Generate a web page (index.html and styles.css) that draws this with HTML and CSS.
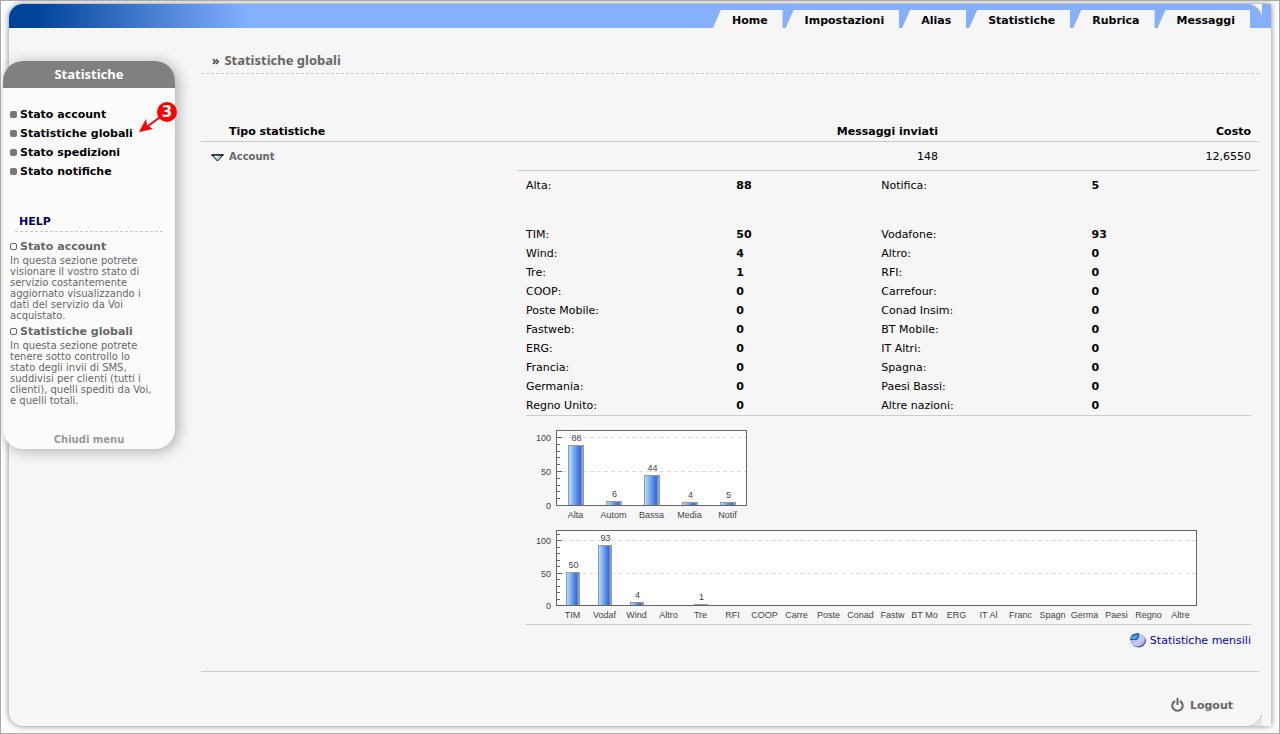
FILE: index.html
```html
<!doctype html>
<html lang="it">
<head>
    <meta charset="UTF-8">
    <meta name="viewport" content="width=device-width, initial-scale=1.0">
    <title>Statistiche globali</title>
    <link rel="stylesheet" href="styles.css">
</head>
<body>
<div class="page">
    <div class="header">
        <nav class="tabs">
            <a class="tab" href="#">Home</a>
            <a class="tab" href="#">Impostazioni</a>
            <a class="tab" href="#">Alias</a>
            <a class="tab" href="#">Statistiche</a>
            <a class="tab" href="#">Rubrica</a>
            <a class="tab" href="#">Messaggi</a>
        </nav>
        <svg class="corner-top" width="12" height="13" viewBox="0 0 12 13">
            <defs>
                <linearGradient id="fold" x1="0" y1="1" x2="1" y2="0">
                    <stop offset="0.4" stop-color="#c4c4c4"/>
                    <stop offset="0.8" stop-color="#fff"/>
                </linearGradient>
            </defs>
            <path d="M0 0H12V13Q10 3 0 0Z" fill="url(#fold)"/>
        </svg>
    </div>

    <div class="body">
        <aside class="sidebar">
            <h2 class="sidebar-title">Statistiche</h2>
            <ul class="menu">
                <li><a href="#">Stato account</a></li>
                <li><a href="#">Statistiche globali</a></li>
                <li><a href="#">Stato spedizioni</a></li>
                <li><a href="#">Stato notifiche</a></li>
            </ul>
            <h3 class="help-title">HELP</h3>
            <div class="help">
                <h4>Stato account</h4>
                <p>In questa sezione potrete<br>visionare il vostro stato di<br>servizio costantemente<br>aggiornato visualizzando i<br>dati del servizio da Voi<br>acquistato.</p>
                <h4>Statistiche globali</h4>
                <p>In questa sezione potrete<br>tenere sotto controllo lo<br>stato degli invii di SMS,<br>suddivisi per clienti (tutti i<br>clienti), quelli spediti da Voi,<br>e quelli totali.</p>
            </div>
            <button class="close-menu" type="button">Chiudi menu</button>
            <div class="marker">
                <svg width="42" height="34" viewBox="0 0 42 34">
                    <path d="M26 14L11 25" stroke="#f00" stroke-width="2"/>
                    <path d="M2 31L9 18L10 24L16 28Z" fill="#f00"/>
                    <circle cx="30" cy="11" r="10" fill="#f00"/>
                    <text class="marker-number" x="30" y="16" text-anchor="middle">3</text>
                </svg>
            </div>
        </aside>

        <main class="content">
            <h1 class="title"><span class="arrows">»</span> Statistiche globali</h1>

            <table class="summary">
                <thead>
                    <tr>
                        <th class="type">Tipo statistiche</th>
                        <th class="sent">Messaggi inviati</th>
                        <th class="cost">Costo</th>
                    </tr>
                </thead>
                <tbody>
                    <tr>
                        <td class="type">
                            <button class="toggle" type="button">
                                <svg width="13" height="8" viewBox="0 0 13 8">
                                    <path d="M1 1H12L6.500 7Z" fill="#a8dcf0" stroke="#000"/>
                                    <path d="M2.500 1.500H8L5 4Z" fill="#fff"/>
                                    <path d="M0 1H13" stroke="#000" stroke-width="1"/>
                                </svg>
                                Account
                            </button>
                        </td>
                        <td class="sent">148</td>
                        <td class="cost">12,6550</td>
                    </tr>
                </tbody>
            </table>

            <div class="details">
                <table class="counts priority">
                    <tr><th>Alta:</th><td>88</td><th>Notifica:</th><td>5</td></tr>
                </table>
                <table class="counts">
                    <tr><th>TIM:</th><td>50</td><th>Vodafone:</th><td>93</td></tr>
                    <tr><th>Wind:</th><td>4</td><th>Altro:</th><td>0</td></tr>
                    <tr><th>Tre:</th><td>1</td><th>RFI:</th><td>0</td></tr>
                    <tr><th>COOP:</th><td>0</td><th>Carrefour:</th><td>0</td></tr>
                    <tr><th>Poste Mobile:</th><td>0</td><th>Conad Insim:</th><td>0</td></tr>
                    <tr><th>Fastweb:</th><td>0</td><th>BT Mobile:</th><td>0</td></tr>
                    <tr><th>ERG:</th><td>0</td><th>IT Altri:</th><td>0</td></tr>
                    <tr><th>Francia:</th><td>0</td><th>Spagna:</th><td>0</td></tr>
                    <tr><th>Germania:</th><td>0</td><th>Paesi Bassi:</th><td>0</td></tr>
                    <tr><th>Regno Unito:</th><td>0</td><th>Altre nazioni:</th><td>0</td></tr>
                </table>

                <div class="charts">
                    <svg class="chart" id="chart-priority" width="221" height="94"></svg>
                    <svg class="chart" id="chart-operators" width="671" height="94"></svg>
                </div>

                <a class="monthly" href="#">
                    <svg width="16" height="15" viewBox="0 0 16 15">
                        <defs>
                            <linearGradient id="pie" x1="0" y1="0" x2="1" y2="1">
                                <stop offset="0" stop-color="#8e92e4"/>
                                <stop offset="0.600" stop-color="#c8ccf8"/>
                                <stop offset="1" stop-color="#9498e4"/>
                            </linearGradient>
                        </defs>
                        <ellipse cx="8.500" cy="8" rx="7.500" ry="6.500" fill="#54588c"/>
                        <ellipse cx="7.500" cy="7" rx="7.500" ry="6.500" fill="url(#pie)"/>
                        <path d="M0 6Q1 0 9 0V4L7 7H0Z" fill="#1c5ca0"/>
                        <path d="M1 5Q2 2 8 2V3L6 6H0Z" fill="#48a8e8"/>
                    </svg>
                    Statistiche mensili
                </a>
            </div>

            <div class="footer">
                <a class="logout" href="#">
                    <svg width="13" height="14" viewBox="0 0 13 14" fill="none" stroke="#666" stroke-width="2">
                        <path d="M4 3A5.200 5.200 0 1 0 9 3M6.500 0V7"/>
                    </svg>
                    Logout
                </a>
            </div>
        </main>
    </div>
    <svg class="corner-bottom" width="12" height="12" viewBox="0 0 12 12">
        <path d="M0 12Q9 9 12 0V12Z" fill="#e6e6e6"/>
        <path d="M0 12Q9 9 12 0" fill="none" stroke="#c4c4c4"/>
    </svg>
</div>
<script src="charts.js"></script>
</body>
</html>
```
FILE: styles.css
```css
* {
    margin: 0;
    padding: 0;
    box-sizing: border-box;
}

body {
    min-height: 100vh;
    padding: 3px 8px 7px;
    border: 1px solid #aaa;
    background: #fff;
    font: 11px/19px Verdana, "DejaVu Sans", sans-serif;
    color: #000;
}

a {
    color: inherit;
    text-decoration: none;
}

button {
    border: 0;
    background: none;
    font: inherit;
    cursor: pointer;
}

table {
    width: 100%;
    border-collapse: collapse;
}

.page {
    position: relative;
    border-radius: 14px 0 0 14px;
    background: #f6f6f6;
    box-shadow: 0 0 6px rgba(0, 0, 0, .5);
}

.header {
    position: relative;
    display: flex;
    justify-content: flex-end;
    align-items: flex-end;
    height: 24px;
    padding-right: 21px;
    border-top-left-radius: 14px;
    background: #84b0ff linear-gradient(to right, #00449a 0, #00449a 28px, #84b0ff 240px);
}

.tabs {
    display: flex;
    gap: 3px;
}

.tab {
    padding: 0 15px 0 19px;
    height: 18px;
    line-height: 21px;
    font-weight: bold;
    background: #f6f6f6;
    clip-path: polygon(8px 0, 100% 0, 100% 100%, 0 100%);
}

.corner-top {
    position: absolute;
    top: 0;
    right: 9px;
}

.corner-bottom {
    position: absolute;
    right: 9px;
    bottom: 0;
}

.body {
    display: flex;
    align-items: flex-start;
}

/* left menu */
.sidebar {
    position: relative;
    flex: none;
    width: 172px;
    margin: 33px 0 0 -6px;
    border-radius: 20px;
    background: #fcfcfc;
    box-shadow: 3px 2px 14px rgba(0, 0, 0, .3);
}

.sidebar-title {
    height: 27px;
    line-height: 27px;
    border-radius: 20px 20px 0 0;
    background: #808080;
    color: #fff;
    font-family: Tahoma, "Noto Sans", sans-serif;
    font-size: 13px;
    text-align: center;
}

.menu {
    padding: 17px 0 0 7px;
    list-style: none;
    font-weight: bold;
}

.menu a,
.help h4 {
    display: flex;
    align-items: center;
    gap: 3px;
}

.menu a::before,
.help h4::before {
    content: "";
    box-sizing: border-box;
    width: 7px;
    height: 7px;
    border-radius: 2px;
    background: #777;
}

.help-title {
    margin: 32px 12px 0;
    padding-left: 4px;
    border-bottom: 1px dashed #ccc;
    color: #006;
    font-size: 11px;
    line-height: 18px;
}

.help {
    padding: 6px 0 0 7px;
    color: #666;
    font-size: 10px;
    line-height: 11px;
}

.help h4 {
    font-size: 11px;
    line-height: 17px;
}

.help h4::before {
    border: 1px solid #666;
    background: none;
}

.help p {
    padding-bottom: 2px;
}

.close-menu {
    display: block;
    width: 100%;
    margin-top: 22px;
    color: #999;
    font-size: 10px;
    font-weight: bold;
    line-height: 19px;
}

.marker {
    position: absolute;
    top: 40px;
    left: 134px;
}

.marker-number {
    fill: #fff;
    font: bold 15px "DejaVu Sans", sans-serif;
}

/* main column */
.content {
    flex: 1;
    min-width: 0;
    padding: 23px 12px 0 26px;
}

.title {
    display: flex;
    gap: 5px;
    height: 23px;
    padding-left: 11px;
    border-bottom: 1px dashed #ccc;
    color: #666;
    font: bold 13px/19px Tahoma, "Noto Sans", sans-serif;
}

.arrows {
    color: #444;
    font-size: 12px;
    line-height: 20px;
}

.summary {
    margin-top: 47px;
}

.summary th,
.summary td {
    padding: 1px 8px 0 0;
    text-align: right;
}

.summary thead tr {
    height: 20px;
    border-bottom: 1px solid #ccc;
}

.summary tbody tr {
    height: 28px;
}

.summary th.type {
    width: 317px;
    padding-left: 28px;
    text-align: left;
}

.summary td.type {
    padding: 2px 0 0 10px;
    text-align: left;
}

.summary .sent {
    width: 428px;
}

.toggle {
    display: flex;
    align-items: center;
    gap: 5px;
    color: #666;
    font-size: 10px;
    font-weight: bold;
}

.toggle svg {
    margin-top: 2px;
}

.details {
    margin-left: 317px;
    padding: 5px 8px 0;
    border-top: 1px solid #ccc;
}

.counts {
    table-layout: fixed;
    border-bottom: 1px solid #ccc;
}

.counts th,
.counts td {
    width: 29%;
    height: 19px;
    text-align: left;
}

.counts th {
    font-weight: normal;
}

.counts td {
    font-weight: bold;
}

.counts td:nth-child(2) {
    width: 20%;
}

.counts td:last-child {
    width: 22%;
}

.priority {
    margin-bottom: 30px;
    border-bottom: 0;
}

.charts {
    display: flex;
    flex-direction: column;
    gap: 6px;
    padding: 12px 0 2px;
    border-bottom: 1px solid #ccc;
}

.chart {
    font: 9px "Liberation Sans", Arial, sans-serif;
    fill: #444;
}

.monthly {
    display: flex;
    justify-content: flex-end;
    align-items: center;
    gap: 4px;
    margin-top: 6px;
    color: #00c;
}

.footer {
    display: flex;
    justify-content: flex-end;
    margin-top: 21px;
    padding: 24px 26px 11px 0;
    border-top: 1px solid #ccc;
}

.logout {
    display: flex;
    align-items: center;
    gap: 6px;
    color: #666;
    font-weight: bold;
}
```
FILE: charts.js
```js
var NS = 'http://www.w3.org/2000/svg';

function add(parent, name, attrs, text) {
    var node = document.createElementNS(NS, name);
    for (var key in attrs) {
        node.setAttribute(key, attrs[key]);
    }
    if (text !== undefined) {
        node.textContent = text;
    }
    parent.appendChild(node);
    return node;
}

function drawChart(id, data, opt) {
    var svg = document.getElementById(id),
        left = 30,
        base = 77,
        top = 2,
        unit = opt.unit,
        defs = add(svg, 'defs', {}),
        grad = add(defs, 'linearGradient', {id: id + '-bar'});

    add(grad, 'stop', {offset: 0, 'stop-color': '#b4e6fc'});
    add(grad, 'stop', {offset: 0.75, 'stop-color': '#3c6cd8'});
    add(grad, 'stop', {offset: 0.82, 'stop-color': '#4474dc'});
    add(grad, 'stop', {offset: 1, 'stop-color': '#a8ccf8'});

    add(svg, 'rect', {x: left + 0.5, y: top + 0.5, width: opt.width, height: base - top, fill: '#fff', stroke: '#666'});

    // axis
    for (var v = 0; v <= opt.max; v += 10) {
        var y = Math.round(base - v * unit) + 0.5,
            big = v % 50 === 0;
        if (v > 0) {
            add(svg, 'path', {d: 'M' + left + ' ' + y + 'h' + (big ? 6 : 4), stroke: '#666'});
        }
        if (big) {
            if (v > 0) {
                add(svg, 'path', {d: 'M' + (left + 6) + ' ' + y + 'H' + (left + opt.width), stroke: '#ddd', 'stroke-dasharray': '4 3'});
            }
            add(svg, 'text', {x: left - 5, y: y + 3, 'text-anchor': 'end'}, v);
        }
    }

    data.forEach(function (item, i) {
        var x = left + opt.first + i * opt.step,
            mid = x + opt.bar / 2,
            h = Math.round(item[1] * unit);
        add(svg, 'text', {x: mid, y: base + 13, 'text-anchor': 'middle'}, item[0]);
        if (item[1]) {
            add(svg, 'rect', {x: x + 0.5, y: base - h + 0.5, width: opt.bar, height: h, fill: 'url(#' + id + '-bar)', stroke: '#999'});
            add(svg, 'text', {x: mid + 1, y: base - h - 4, 'text-anchor': 'middle'}, item[1]);
        }
    });
    add(svg, 'path', {d: 'M' + left + ' ' + (base + 0.5) + 'h' + opt.width, stroke: '#666'});
}

drawChart('chart-priority', [
    ['Alta', 88], ['Autom', 6], ['Bassa', 44], ['Media', 4], ['Notif', 5]
], {width: 190, unit: 0.68, max: 100, first: 12, step: 38, bar: 15});

drawChart('chart-operators', [
    ['TIM', 50], ['Vodaf', 93], ['Wind', 4], ['Altro', 0], ['Tre', 1],
    ['RFI', 0], ['COOP', 0], ['Carre', 0], ['Poste', 0], ['Conad', 0],
    ['Fastw', 0], ['BT Mo', 0], ['ERG', 0], ['IT Al', 0], ['Franc', 0],
    ['Spagn', 0], ['Germa', 0], ['Paesi', 0], ['Regno', 0], ['Altre', 0]
], {width: 640, unit: 0.65, max: 110, first: 10, step: 32, bar: 13});
```
